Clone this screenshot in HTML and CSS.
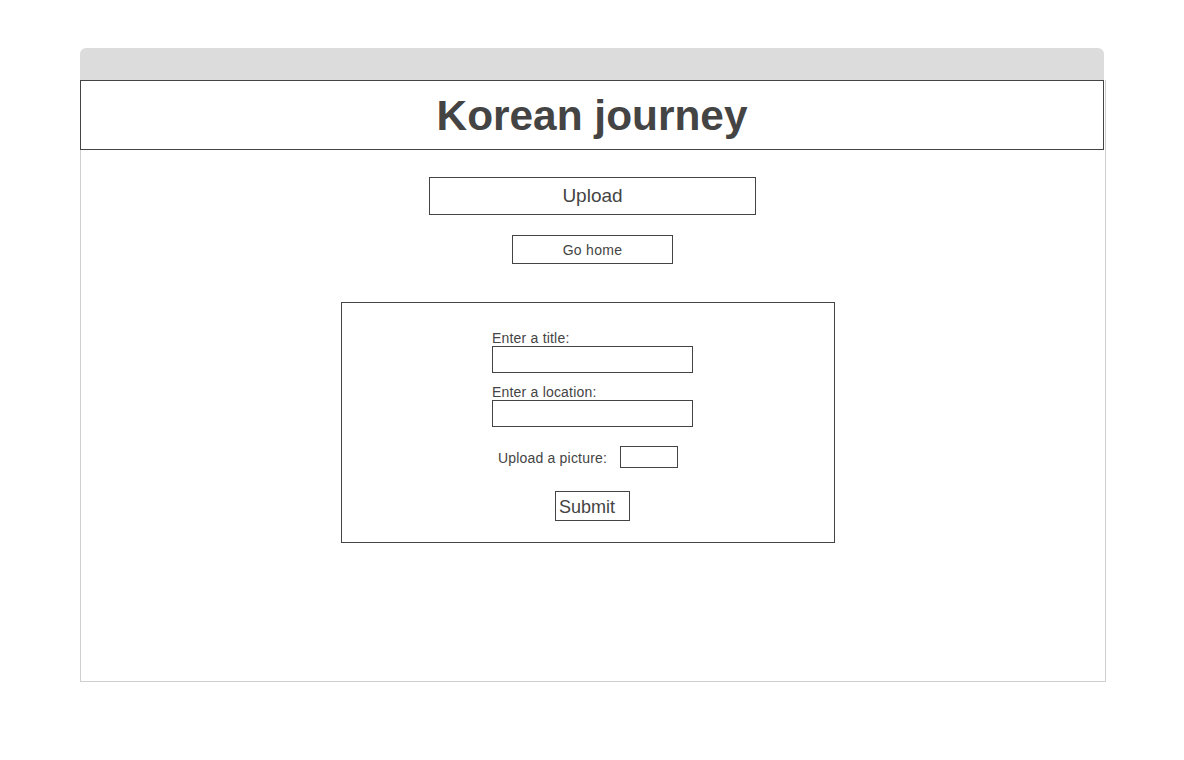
FILE: index.html
```html
<!DOCTYPE html>
<html>
<head>
<meta charset="utf-8">
<link rel="stylesheet" href="styles.css">
</head>
<body>
<div class="window">
  <div class="titlebar"></div>
  <div class="frame">
    <header class="header"><h1 class="title">Korean journey</h1></header>
    <main class="content">
      <button class="btn-upload">Upload</button>
      <button class="btn-home">Go home</button>
      <form class="form">
        <div class="field">
          <label class="label">Enter a title:</label>
          <input class="input" type="text">
        </div>
        <div class="field">
          <label class="label">Enter a location:</label>
          <input class="input" type="text">
        </div>
        <div class="picture-row">
          <span class="picture-label">Upload a picture:</span>
          <span class="picture-box"></span>
        </div>
        <button class="btn-submit" type="button">Submit</button>
      </form>
    </main>
  </div>
</div>
</body>
</html>
```
FILE: styles.css
```css
* { box-sizing: border-box; }
html, body { margin: 0; padding: 0; background: #fff; }
body { font-family: "Liberation Sans", Arial, sans-serif; color: #444; }

.window { margin: 48px 0 0 80px; width: 1026px; }
.titlebar {
  width: 1024px; height: 32px; background: #dcdcdc;
  border-radius: 6px 6px 0 0;
}
.frame {
  width: 1026px; height: 602px;
  border: 1px solid #cfcfcf; border-top: none;
}
.header {
  margin-left: -1px; width: 1024px; height: 70px;
  border: 1px solid #444;
  display: flex; align-items: center; justify-content: center;
}
.title { margin: 3px 0 0 0; font-size: 42.4px; font-weight: bold; color: #444; line-height: 1; }

.content { display: flex; flex-direction: column; align-items: center; }

button { font-family: "Liberation Sans", Arial, sans-serif; color: #444; background: #fff; border: 1px solid #444; padding: 0; cursor: pointer; }

.btn-upload { margin-top: 27px; margin-right: 1px; width: 327px; height: 38px; font-size: 19px; }
.btn-home { margin-top: 20px; margin-right: 1px; width: 161px; height: 29px; font-size: 14px; letter-spacing: 0.3px; }

.form {
  margin: 38px 0 0 0; width: 494px; height: 241px;
  border: 1px solid #444; margin-right: 10px;
  display: flex; flex-direction: column; align-items: center;
  padding-top: 27px;
}
.field { display: flex; flex-direction: column; margin-left: 9px; margin-bottom: 11px; }
.label { font-size: 14px; line-height: 17px; color: #444; letter-spacing: 0.2px; }
.input { width: 201px; height: 27px; border: 1px solid #444; margin: -1px 0 0 0; padding: 0; }

.picture-row { display: flex; align-items: center; margin-top: 8px; gap: 13px; }
.picture-label { font-size: 14px; letter-spacing: 0.2px; padding-top: 2px; }
.picture-box { width: 58px; height: 22px; border: 1px solid #444; }

.btn-submit {
  margin-top: 23px; margin-left: 9px; width: 75px; height: 30px;
  font-size: 18px; text-align: left; padding-left: 3px; padding-top: 2px;
}
```
